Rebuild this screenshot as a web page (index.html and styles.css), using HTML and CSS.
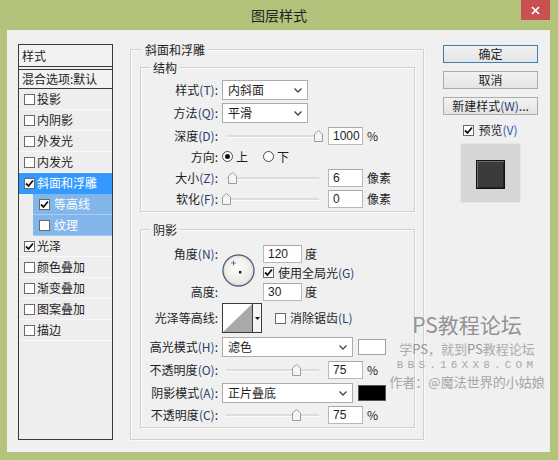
FILE: index.html
```html
<!DOCTYPE html>
<html lang="zh-CN">
<head>
<meta charset="utf-8">
<title>图层样式</title>
<link rel="stylesheet" href="styles.css">
</head>
<body>
<div class="window">
  <div class="titlebar">
    <div></div>
    <div class="title">图层样式</div>
    <div class="close"><svg width="9" height="9" viewBox="0 0 9 9"><path d="M1 1L8 8M8 1L1 8" stroke="#fff" stroke-width="1.7"/></svg></div>
  </div>
  <div class="content">
    <div class="fx-list">
      <div class="fx-head">样式</div>
      <div class="fx-blend">混合选项:默认</div>
      <div class="fx-row"><span class="cb"></span>投影</div>
      <div class="fx-row"><span class="cb"></span>内阴影</div>
      <div class="fx-row"><span class="cb"></span>外发光</div>
      <div class="fx-row"><span class="cb"></span>内发光</div>
      <div class="fx-row selected"><span class="cb"><svg width="9" height="9" viewBox="0 0 9 9"><path d="M1 4.5L3.5 7L8 1.5" fill="none" stroke="#111" stroke-width="1.8"/></svg></span>斜面和浮雕</div>
      <div class="fx-row sub"><span class="cb"><svg width="9" height="9" viewBox="0 0 9 9"><path d="M1 4.5L3.5 7L8 1.5" fill="none" stroke="#111" stroke-width="1.8"/></svg></span>等高线</div>
      <div class="fx-row sub"><span class="cb"></span>纹理</div>
      <div class="fx-row"><span class="cb"><svg width="9" height="9" viewBox="0 0 9 9"><path d="M1 4.5L3.5 7L8 1.5" fill="none" stroke="#111" stroke-width="1.8"/></svg></span>光泽</div>
      <div class="fx-row"><span class="cb"></span>颜色叠加</div>
      <div class="fx-row"><span class="cb"></span>渐变叠加</div>
      <div class="fx-row"><span class="cb"></span>图案叠加</div>
      <div class="fx-row"><span class="cb"></span>描边</div>
    </div>

    <div class="group outer">
      <div class="legend">斜面和浮雕</div>

      <div class="group inner">
        <div class="legend">结构</div>
        <div class="row sel-row first">
          <div class="lbl">样式<span class="key">(T)</span>:</div>
          <div class="select w86"><span>内斜面</span><svg width="8" height="5" viewBox="0 0 8 5"><path d="M0.5 0.5L4 4L7.5 0.5" fill="none" stroke="#444" stroke-width="1.3"/></svg></div>
        </div>
        <div class="row sel-row gap3">
          <div class="lbl">方法<span class="key">(Q)</span>:</div>
          <div class="select w86"><span>平滑</span><svg width="8" height="5" viewBox="0 0 8 5"><path d="M0.5 0.5L4 4L7.5 0.5" fill="none" stroke="#444" stroke-width="1.3"/></svg></div>
        </div>
        <div class="row h21 gap2">
          <div class="lbl">深度<span class="key">(D)</span>:</div>
          <div class="slider"><div class="track"></div><svg class="thumb" style="left:92px" width="9" height="12" viewBox="0 0 9 12"><path d="M0.5 4L4.5 0.5L8.5 4V11.5H0.5Z" fill="#f5f5f5" stroke="#9c9c9c"/></svg></div>
          <div class="num">1000</div><div class="unit">%</div>
        </div>
        <div class="row h21">
          <div class="lbl">方向:</div>
          <span class="radio on"></span><span class="rtext">上</span>
          <span class="radio second"></span><span class="rtext">下</span>
        </div>
        <div class="row h21">
          <div class="lbl">大小<span class="key">(Z)</span>:</div>
          <div class="slider"><div class="track"></div><svg class="thumb" style="left:6px" width="9" height="12" viewBox="0 0 9 12"><path d="M0.5 4L4.5 0.5L8.5 4V11.5H0.5Z" fill="#f5f5f5" stroke="#9c9c9c"/></svg></div>
          <div class="num">6</div><div class="unit">像素</div>
        </div>
        <div class="row h21">
          <div class="lbl">软化<span class="key">(F)</span>:</div>
          <div class="slider"><div class="track"></div><svg class="thumb" style="left:0px" width="9" height="12" viewBox="0 0 9 12"><path d="M0.5 4L4.5 0.5L8.5 4V11.5H0.5Z" fill="#f5f5f5" stroke="#9c9c9c"/></svg></div>
          <div class="num">0</div><div class="unit">像素</div>
        </div>
      </div>

      <div class="group inner shade">
        <div class="legend">阴影</div>
        <div class="angle">
          <div class="lbl a1">角度<span class="key">(N)</span>:</div>
          <div class="dial">
            <svg width="33" height="33" viewBox="0 0 33 33">
              <defs><radialGradient id="dg" cx="0.45" cy="0.4" r="0.6"><stop offset="0" stop-color="#ffffff"/><stop offset="1" stop-color="#e6e4dc"/></radialGradient></defs>
              <circle cx="16.5" cy="16.5" r="15.5" fill="url(#dg)" stroke="#55637f" stroke-width="1.4"/>
              <circle cx="16.5" cy="16.5" r="14.2" fill="none" stroke="#d8d8d8" stroke-width="0.8"/>
              <rect x="17" y="17" width="2.4" height="2.4" fill="#111"/>
              <path d="M11.5 6.5V11.5M9 9H14" stroke="#555" stroke-width="0.8"/>
            </svg>
          </div>
          <div class="cell c1"><div class="num w39">120</div><div class="unit u3">度</div></div>
          <div class="cell c2"><span class="cb"><svg width="9" height="9" viewBox="0 0 9 9"><path d="M1 4.5L3.5 7L8 1.5" fill="none" stroke="#111" stroke-width="1.8"/></svg></span><span class="ctext">使用全局光<span class="key">(G)</span></span></div>
          <div class="lbl a3">高度:</div>
          <div class="cell c3"><div class="num w39">30</div><div class="unit u3">度</div></div>
        </div>
        <div class="row contour-row">
          <div class="lbl">光泽等高线:</div>
          <div class="contour">
            <div class="curve"><svg width="29" height="28" viewBox="0 0 29 28"><path d="M0 28L29 0V28Z" fill="#a9a9a9"/></svg></div>
            <div class="drop"><svg width="5" height="3" viewBox="0 0 5 3"><path d="M0 0H5L2.5 3Z" fill="#111"/></svg></div>
          </div>
          <span class="cb aa"></span><span class="ctext">消除锯齿<span class="key">(L)</span></span>
        </div>
        <div class="row sel-row gap4">
          <div class="lbl">高光模式<span class="key">(H)</span>:</div>
          <div class="select w131"><span>滤色</span><svg width="8" height="5" viewBox="0 0 8 5"><path d="M0.5 0.5L4 4L7.5 0.5" fill="none" stroke="#444" stroke-width="1.3"/></svg></div>
          <div class="swatch white"></div>
        </div>
        <div class="row sel-row gap3">
          <div class="lbl">不透明度<span class="key">(O)</span>:</div>
          <div class="slider"><div class="track"></div><svg class="thumb" style="left:70px" width="9" height="12" viewBox="0 0 9 12"><path d="M0.5 4L4.5 0.5L8.5 4V11.5H0.5Z" fill="#f5f5f5" stroke="#9c9c9c"/></svg></div>
          <div class="num">75</div><div class="unit">%</div>
        </div>
        <div class="row sel-row gap3">
          <div class="lbl">阴影模式<span class="key">(A)</span>:</div>
          <div class="select w131"><span>正片叠底</span><svg width="8" height="5" viewBox="0 0 8 5"><path d="M0.5 0.5L4 4L7.5 0.5" fill="none" stroke="#444" stroke-width="1.3"/></svg></div>
          <div class="swatch black"></div>
        </div>
        <div class="row sel-row gap2">
          <div class="lbl">不透明度<span class="key">(C)</span>:</div>
          <div class="slider"><div class="track"></div><svg class="thumb" style="left:70px" width="9" height="12" viewBox="0 0 9 12"><path d="M0.5 4L4.5 0.5L8.5 4V11.5H0.5Z" fill="#f5f5f5" stroke="#9c9c9c"/></svg></div>
          <div class="num">75</div><div class="unit">%</div>
        </div>
      </div>
    </div>

    <div class="side">
      <div class="btn default">确定</div>
      <div class="btn">取消</div>
      <div class="btn">新建样式<span class="key">(W)</span>...</div>
      <div class="preview-check"><span class="cb"><svg width="9" height="9" viewBox="0 0 9 9"><path d="M1 4.5L3.5 7L8 1.5" fill="none" stroke="#111" stroke-width="1.8"/></svg></span><span class="ctext">预览<span class="key blue">(V)</span></span></div>
      <div class="preview"><div class="swatch-big"></div></div>
    </div>
  </div>

  <div class="watermark">
    <div class="wm1">PS教程论坛</div>
    <div class="wm2">学<span class="wps">PS</span>，就到<span class="wps">PS</span>教程论坛</div>
    <div class="wm3">BBS.16XX8.COM</div>
    <div class="wm4">作者：@魔法世界的小姑娘</div>
  </div>
</div>
</body>
</html>
```
FILE: styles.css
```css
* { box-sizing: border-box; }
html, body { margin: 0; padding: 0; }
body {
  width: 558px;
  height: 460px;
  overflow: hidden;
  background: #b4c37c;
  font-family: "Noto Sans CJK SC", "Noto Sans", sans-serif;
  font-size: 12px;
  color: #1e1e1e;
}
.window {
  position: relative;
  width: 558px;
  height: 460px;
  background: #b4c37c;
  display: flex;
  flex-direction: column;
}
.titlebar {
  height: 30px;
  flex: none;
  display: grid;
  grid-template-columns: 1fr auto 1fr;
}
.title {
  font-size: 14px;
  line-height: 30px;
  color: #222;
}
.close {
  justify-self: end;
  width: 29px;
  height: 20px;
  margin-right: 8px;
  background: #c75050;
  display: flex;
  align-items: center;
  justify-content: center;
}
.content {
  flex: 1;
  margin: 0 8px 8px 7px;
  background: #f0f0f0;
  display: flex;
  align-items: flex-start;
  padding: 14px 0 0 11px;
}

/* effect list */
.fx-list {
  width: 95px;
  height: 396px;
  flex: none;
  border: 1px solid #3a3a3a;
  background: #eeeeee;
}
.fx-head {
  height: 22px;
  line-height: 21px;
  padding-left: 3px;
  border-bottom: 1px solid #3a3a3a;
  background: #f2f2f2;
}
.fx-blend {
  margin-top: 2px;
  height: 20px;
  line-height: 18px;
  padding-left: 3px;
  border-top: 1px solid #3a3a3a;
  border-bottom: 1px solid #3a3a3a;
  background: #f2f2f2;
}
.fx-row {
  height: 21px;
  display: flex;
  align-items: center;
  padding-left: 5px;
  border-bottom: 1px solid #f9f9f9;
  line-height: 16px;
}
.fx-row.selected { background: #3399ff; color: #fff; border-bottom-color: #3399ff; }
.fx-row.sub { margin-left: 14px; padding-left: 6px; background: #82b6ea; color: #fff; border-bottom-color: #a9cdf2; }
.cb {
  width: 11px;
  height: 11px;
  flex: none;
  border: 1px solid #6a6a6a;
  background: #fff;
  margin-right: 2px;
  display: flex;
  align-items: center;
  justify-content: center;
}
.sub .cb { margin-right: 4px; }

/* group boxes */
.group {
  border: 1px solid #d0d0d0;
  box-shadow: inset 1px 1px 0 #fafafa, 1px 1px 0 #fafafa;
}
.legend {
  width: fit-content;
  margin: -8px 0 0 9px;
  padding: 0 3px;
  line-height: 16px;
  background: #f0f0f0;
}
.outer {
  width: 294px;
  height: 391px;
  flex: none;
  margin: 5px 0 0 17px;
}
.outer > .legend { margin-left: 11px; }
.inner {
  width: 275px;
  margin: 9px 0 0 9px;
  padding-bottom: 2px;
}
.inner.shade { margin-top: 17px; }

.row {
  display: flex;
  align-items: center;
  height: 20px;
}
.row.h21 { height: 21px; }
.first { margin-top: 4px; }
.gap2 { margin-top: 2px; }
.gap3 { margin-top: 3px; }
.gap4 { margin-top: 4px; }
.lbl {
  width: 77px;
  flex: none;
  text-align: right;
  margin-right: 4px;
  line-height: 16px;
  white-space: nowrap;
}
.key { color: #2a3d74; }
.key.blue { color: #2f55b0; }

.select {
  height: 20px;
  flex: none;
  border: 1px solid #acacac;
  background: #fff;
  display: flex;
  align-items: center;
  justify-content: space-between;
  padding: 0 5px 0 5px;
  line-height: 16px;
}
.w86 { width: 86px; }
.w131 { width: 131px; }

.slider {
  position: relative;
  width: 103px;
  height: 12px;
  flex: none;
}
.track {
  margin: 5px 0 0 4px;
  width: 93px;
  height: 3px;
  background: #dcdcdc;
  border-bottom: 1px solid #fbfbfb;
}
.thumb { position: absolute; top: 0; }
.num {
  width: 35px;
  height: 18px;
  flex: none;
  margin-left: 3px;
  border: 1px solid #b8b8b8;
  border-top-color: #a8a8a8;
  background: #fff;
  padding-left: 4px;
  line-height: 16px;
  font-family: "Liberation Sans", "Noto Sans", sans-serif;
  font-size: 12px;
}
.num.w39 { width: 39px; margin-left: 0; }
.unit { margin-left: 4px; line-height: 16px; }
.unit.u3 { margin-left: 3px; }

.radio {
  width: 11px;
  height: 11px;
  flex: none;
  border-radius: 50%;
  border: 1px solid #4a4a4a;
  background: #fff;
  display: flex;
  align-items: center;
  justify-content: center;
}
.radio.on::after {
  content: "";
  width: 5px;
  height: 5px;
  border-radius: 50%;
  background: #111;
}
.radio.second { margin-left: 15px; }
.rtext { margin-left: 3px; line-height: 16px; }

/* angle block */
.angle {
  margin-top: 6px;
  display: grid;
  grid-template-columns: 81px 41px auto;
  grid-template-rows: 19px 19px 19px;
}
.angle .lbl { width: auto; margin-right: 4px; align-self: center; }
.a1 { grid-column: 1; grid-row: 1; }
.a3 { grid-column: 1; grid-row: 3; }
.dial { grid-column: 2; grid-row: 1 / 4; align-self: start; margin-top: 10px; height: 33px; }
.dial svg { display: block; }
.cell { display: flex; align-items: center; grid-column: 3; }
.c1 { grid-row: 1; }
.c2 { grid-row: 2; }
.c3 { grid-row: 3; }
.ctext { margin-left: 1px; line-height: 16px; white-space: nowrap; }
.c2 .cb { margin-right: 3px; }

.contour-row { height: 30px; margin-top: 2px; }
.contour {
  width: 40px;
  height: 30px;
  flex: none;
  border: 1px solid #3a3a3a;
  display: flex;
  background: #fff;
}
.curve { width: 29px; height: 28px; }
.curve svg { display: block; }
.drop {
  width: 9px;
  border-left: 1px solid #3a3a3a;
  background: #f4f4f4;
  display: flex;
  align-items: center;
  justify-content: center;
}
.cb.aa { margin-left: 13px; margin-right: 3px; }

.swatch {
  width: 28px;
  height: 16px;
  flex: none;
  margin-left: 5px;
  border: 1px solid #a0a0a0;
}
.swatch.white { background: #fff; }
.swatch.black { background: #000; border-color: #555; }

/* side */
.side {
  width: 95px;
  flex: none;
  margin: 1px 0 0 19px;
  display: flex;
  flex-direction: column;
}
.btn {
  height: 18px;
  margin-bottom: 8px;
  border: 1px solid #acacac;
  background: linear-gradient(#f2f2f2, #e4e4e4);
  text-align: center;
  line-height: 16px;
  white-space: nowrap;
}
.btn.default { border-color: #3c7fb1; }
.preview-check {
  height: 16px;
  margin-top: -1px;
  display: flex;
  align-items: center;
  justify-content: center;
}
.preview-check .cb { margin-right: 3px; }
.preview {
  align-self: center;
  width: 61px;
  height: 60px;
  margin-top: 5px;
  background: #d6d6d6;
  border: 1px solid #e6e6e6;
  display: flex;
  align-items: center;
  justify-content: center;
}
.swatch-big {
  width: 29px;
  height: 29px;
  margin-top: 2px;
  background: #3b3b3b;
  border: 1px solid #111;
  box-shadow: inset 1px 1px 0 #6b6b6b, inset -1px -1px 0 #222;
}

/* watermark */
.watermark {
  position: absolute;
  left: 387px;
  top: 312px;
  width: 160px;
  text-align: center;
  color: #a3a3a3;
  white-space: nowrap;
}
.wm1 { font-size: 21px; line-height: 24px; color: #939393; }
.wm2 { font-size: 13px; line-height: 14px; margin-top: 6px; color: #ababab; }
.wps { color: #959595; }
.wm3 {
  font-family: "Liberation Mono", "DejaVu Sans Mono", monospace;
  font-size: 11px;
  line-height: 12px;
  margin-top: 3px;
  letter-spacing: 4.2px;
  color: #a8a8a8;
}
.wm4 { font-size: 13px; line-height: 16px; margin-top: 3px; color: #a5a5a5; }
```
